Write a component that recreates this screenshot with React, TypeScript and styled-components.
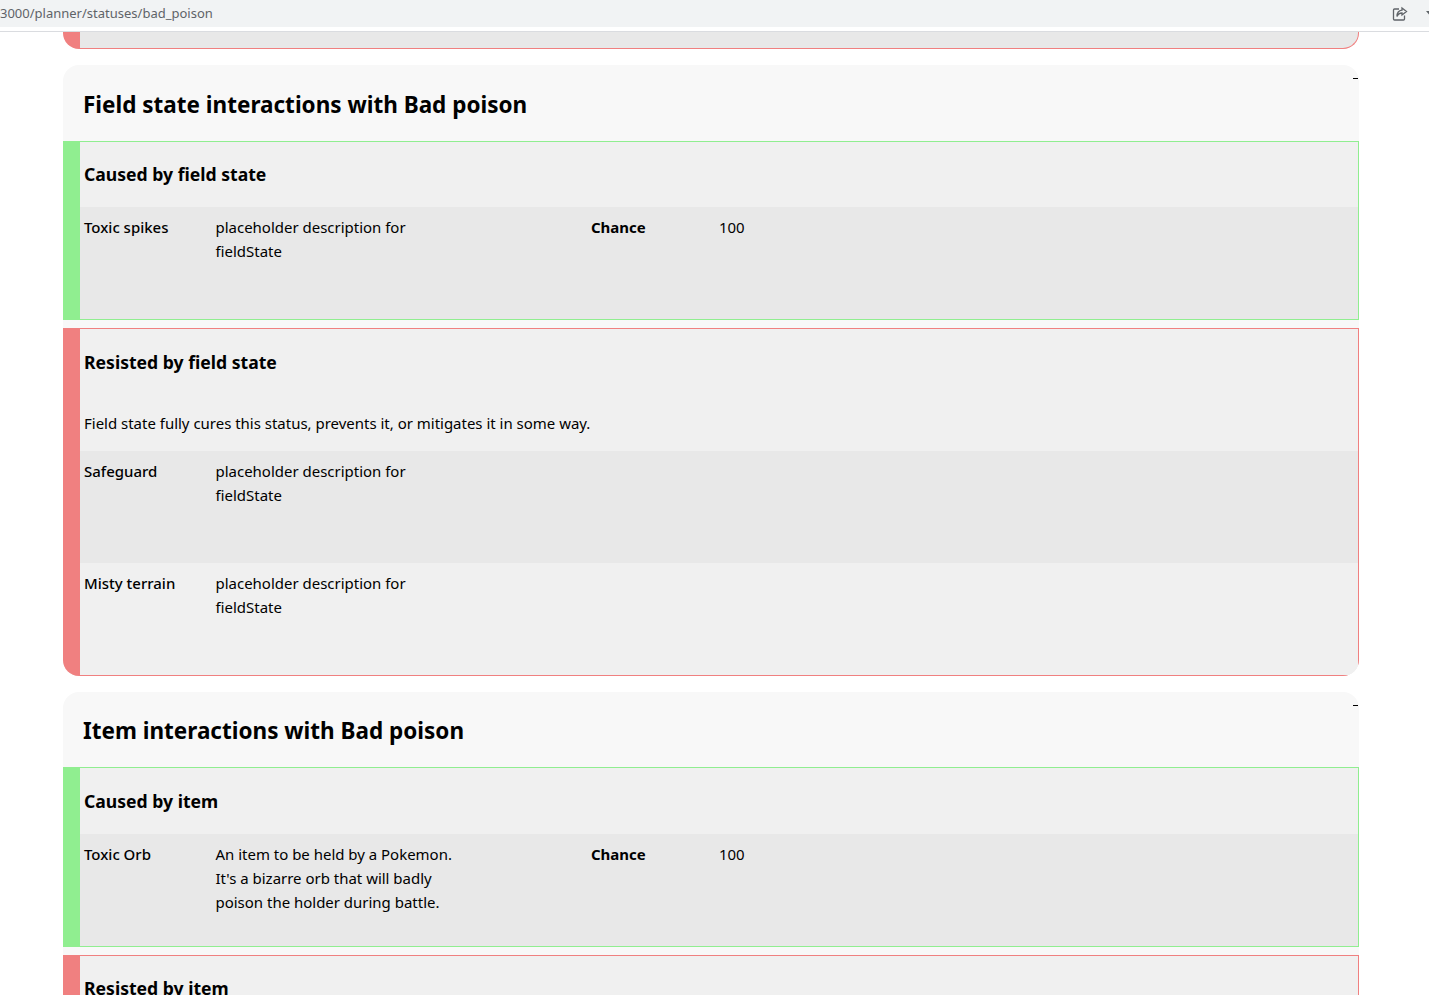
import styled, { createGlobalStyle } from 'styled-components'

const GlobalStyle = createGlobalStyle`
  html, body {
    margin: 0;
    padding: 0;
    height: 100%;
    overflow: hidden;
    background: #fff;
    font-family: "Noto Sans", "Open Sans", sans-serif;
    color: #000;
  }
`

const GREEN = '#90ee90'
const RED = '#f08080'

const Frame = styled.div`
  width: 1429px;
  height: 995px;
  overflow: hidden;
`

const AddressBar = styled.div`
  height: 27px;
  background: #f1f3f4;
  display: flex;
  align-items: center;
  justify-content: space-between;
  font-size: 13px;
  line-height: 25px;
  color: #5f6368;
  overflow: hidden;
`

const BarGap = styled.div`
  height: 4px;
  background: #fff;
  border-bottom: 1px solid #dadce0;
`

const BarIcons = styled.div`
  display: flex;
  align-items: center;
  gap: 18px;
  margin-right: -7px;
`

const Page = styled.main`
  padding: 0 70px 0 63px;
  display: flex;
  flex-direction: column;
  gap: 16px;
`

const Card = styled.section`
  position: relative;
  background: #f8f8f8;
  border-radius: 16px;
  overflow: hidden;
  display: flex;
  flex-direction: column;
  gap: 8px;
`

const CardHeader = styled.h2`
  margin: 0 0 -8px;
  height: 75.5px;
  padding: 3px 0 0 20px;
  box-sizing: border-box;
  display: flex;
  align-items: center;
  font-size: 22.5px;
  font-weight: 700;
  line-height: 1.2;
`

const Dash = styled.span`
  position: absolute;
  top: 13px;
  right: 1px;
  width: 5px;
  height: 1px;
  background: #000;
`

const Block = styled.div<{ $color: string }>`
  background: #f0f0f0;
  border: 1px solid ${(p) => p.$color};
  border-left: 17px solid ${(p) => p.$color};
`

const Stub = styled(Block)`
  height: 16px;
  background: #e8e8e8;
  border-top: none;
  border-radius: 0 0 16px 16px;
`

const BlockTitle = styled.h3`
  margin: 0;
  height: 65.5px;
  padding: 0 0 0 4px;
  box-sizing: border-box;
  display: flex;
  align-items: center;
  font-size: 17.6px;
  font-weight: 700;
`

const BlockNote = styled.p`
  margin: 0;
  padding: 16px 0 16px 4px;
  font-size: 14.97px;
  line-height: 24px;
`

const Row = styled.div<{ $shaded: boolean }>`
  display: grid;
  grid-template-columns: 131.5px 375.5px 128px 1fr;
  height: 112px;
  padding: 8px 0 0 4px;
  box-sizing: border-box;
  align-items: start;
  background: ${(p) => (p.$shaded ? '#e8e8e8' : '#f0f0f0')};
  font-size: 14.97px;
  line-height: 24px;
`

const RowName = styled.span`
  font-weight: 500;
`

const RowText = styled.span`
  max-width: 250px;
`

const RowLabel = styled.span`
  font-weight: 700;
`

type Entry = { name: string; text: string; chance?: string }

function Interaction({
  color,
  title,
  note,
  entries,
}: {
  color: string
  title: string
  note?: string
  entries: Entry[]
}) {
  return (
    <Block $color={color}>
      <BlockTitle>{title}</BlockTitle>
      {note && <BlockNote>{note}</BlockNote>}
      {entries.map((e, i) => (
        <Row key={e.name} $shaded={i % 2 === 0}>
          <RowName>{e.name}</RowName>
          <RowText>{e.text}</RowText>
          {e.chance && <RowLabel>Chance</RowLabel>}
          {e.chance && <span>{e.chance}</span>}
        </Row>
      ))}
    </Block>
  )
}

const PLACEHOLDER = 'placeholder description for fieldState'

export default function App() {
  return (
    <Frame>
      <GlobalStyle />
      <AddressBar>
        <span>3000/planner/statuses/bad_poison</span>
        <BarIcons>
          <svg width="16" height="16" viewBox="0 0 16 16" fill="none" stroke="#5f6368" strokeWidth="1.3">
            <path d="M7 3H2.5A1 1 0 0 0 1.5 4v9a1 1 0 0 0 1 1h9a1 1 0 0 0 1-1V9.5" />
            <path d="M10 2l4.5 3.5L10 9V7C7.5 7 6 8 5 10.5 5 7 7 4.5 10 4.2z" />
          </svg>
          <svg width="10" height="6" viewBox="0 0 10 6" fill="#5f6368">
            <path d="M0 0h10L5 6z" />
          </svg>
        </BarIcons>
      </AddressBar>
      <BarGap />
      <Page>
        <Stub $color={RED} />
        <Card>
          <CardHeader>Field state interactions with Bad poison</CardHeader>
          <Dash />
          <Interaction
            color={GREEN}
            title="Caused by field state"
            entries={[{ name: 'Toxic spikes', text: PLACEHOLDER, chance: '100' }]}
          />
          <Interaction
            color={RED}
            title="Resisted by field state"
            note="Field state fully cures this status, prevents it, or mitigates it in some way."
            entries={[
              { name: 'Safeguard', text: PLACEHOLDER },
              { name: 'Misty terrain', text: PLACEHOLDER },
            ]}
          />
        </Card>
        <Card>
          <CardHeader>Item interactions with Bad poison</CardHeader>
          <Dash />
          <Interaction
            color={GREEN}
            title="Caused by item"
            entries={[
              {
                name: 'Toxic Orb',
                text: "An item to be held by a Pokemon. It's a bizarre orb that will badly poison the holder during battle.",
                chance: '100',
              },
            ]}
          />
          <Interaction color={RED} title="Resisted by item" entries={[]} />
        </Card>
      </Page>
    </Frame>
  )
}
